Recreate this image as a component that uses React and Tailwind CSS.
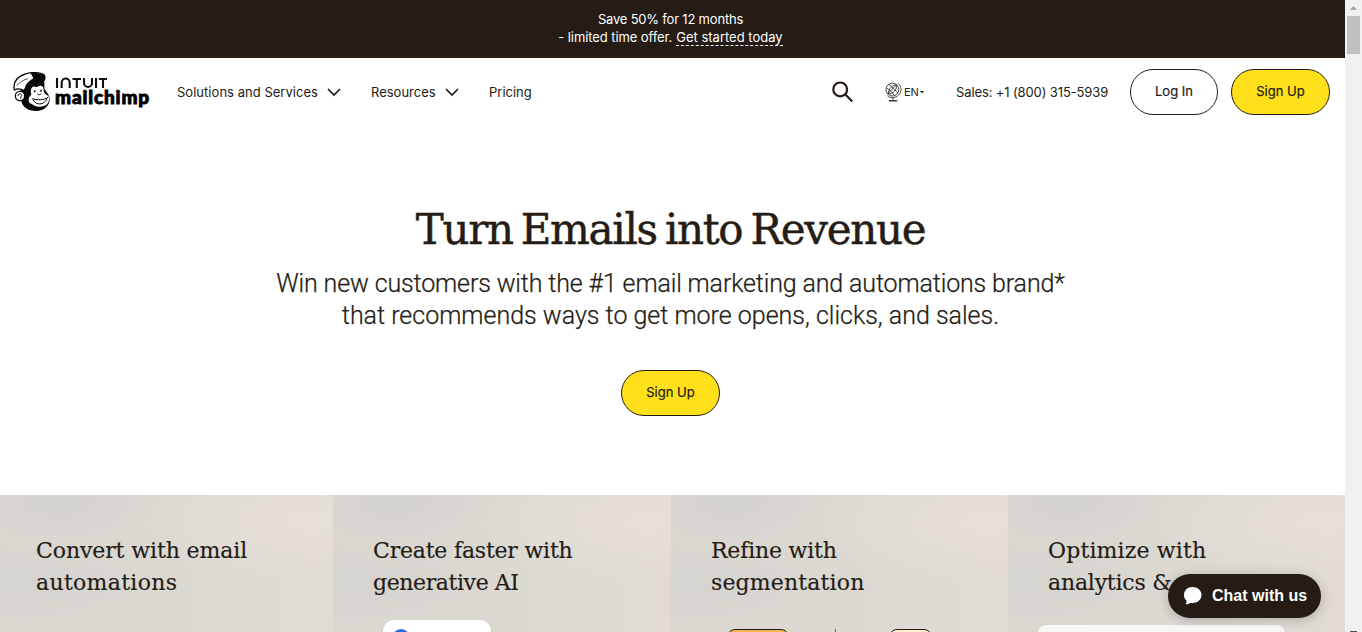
const serif = "font-['DejaVu_Serif',serif]";

function Mascot() {
  return (
    <svg width="38" height="40" viewBox="39 36 114 120" className="block shrink-0">
      <path d="M72 78C82 62 112 56 132 64C134 72 132 80 134 88C140 96 146 104 149 114C152 134 134 153 108 153C84 153 68 142 64 124L60 94Z" fill="#0b0908" />
      <path d="M43 90C38 62 56 48 76 42C92 36 118 36 132 44C137 50 134 60 130 65C110 56 88 64 72 92C62 86 50 86 43 90Z" fill="#fff" stroke="#0b0908" strokeWidth="4" />
      <path d="M92 40C106 38 126 38 134 47C136 56 133 62 130 66C110 54 86 66 74 88C74 76 84 64 100 55C98 50 95 45 92 40Z" fill="#0b0908" />
      <path d="M50 78C58 66 70 60 84 56" fill="none" stroke="#0b0908" strokeWidth="2" />
      <circle cx="60" cy="108" r="14" fill="#fff" stroke="#0b0908" strokeWidth="4" />
      <path d="M54 108C54 100 64 99 65 106C65 110 61 111 62 116" fill="none" stroke="#0b0908" strokeWidth="3" />
      <path d="M94 104C90 92 94 78 104 80C110 82 112 82 116 78C126 74 133 82 131 94C133 100 136 104 142 106C150 112 149 124 141 133C130 143 106 143 96 132C84 130 82 112 94 104Z" fill="#fff" />
      <path d="M104 91V97M123 89V95" fill="none" stroke="#0b0908" strokeWidth="4.5" />
      <path d="M112 102C116 106 122 104 124 101M97 116C112 121 130 121 144 112M99 118C106 137 134 137 141 115" fill="none" stroke="#0b0908" strokeWidth="3" />
    </svg>
  );
}

function Logo() {
  return (
    <div className="flex w-[139px] items-center gap-[4px]">
      <Mascot />
      <div className="w-[97px] text-black">
        <svg width="53" height="12" viewBox="0 0 53 12" className="block" fill="none" stroke="#111" strokeWidth="2.1">
          <path d="M2 1V11M6.7 11V5.5A4 4 0 0 1 14.7 5.5V11M17.5 2H26M21.8 2V11M29 1V6A4 4 0 0 0 37 6V1M41 1V11M43.8 2H52M48 2V11" />
        </svg>
        <div className="whitespace-nowrap pb-[3px] font-['Lato',sans-serif] text-[19px] leading-[16px] font-black tracking-[0.85px] [-webkit-text-stroke:0.9px_#000]">mailchimp</div>
      </div>
    </div>
  );
}

function Chevron() {
  return (
    <svg width="14" height="9" viewBox="0 0 14 9" className="block shrink-0" fill="none" stroke="#241c15" strokeWidth="1.7">
      <path d="M1 1L7 7L13 1" />
    </svg>
  );
}

function Globe() {
  return (
    <svg width="17" height="20" viewBox="0 0 17 20" className="block" fill="none" stroke="#241c15" strokeWidth="0.8">
      <circle cx="7.4" cy="7.6" r="6.4" />
      <path d="M13 1.2C16.8 4.6 17 10.2 13.6 13C10.6 16.2 5.5 16.6 2.4 13.8M8 15.8V18.6" />
      <path d="M3.8 18.8H12.2" strokeWidth="1.3" />
      <path d="M11.5 2.8C7.5 2.6 3.2 7 3.2 12M11.5 2.8C9.2 5.2 5 9 3.2 12M11.5 2.8C12.4 7 8 12 3.2 12M4 2.5C6.4 4.4 11.4 9.4 12.8 11M1.5 6C4.2 7.4 8 11 9.4 13.5" />
    </svg>
  );
}

function Pill({ yellow, w, children }) {
  return (
    <button className={`flex h-[46px] items-center justify-center whitespace-nowrap rounded-full border border-[#241c15] pb-[3px] text-[13px] leading-4 [-webkit-text-stroke:0.2px_#241c15] ${yellow ? "bg-[#ffe01b]" : "bg-white"} ${w}`}>
      {children}
    </button>
  );
}

function Card({ lines, first, tracking, children }) {
  return (
    <section className={`relative h-[137px] overflow-hidden bg-[radial-gradient(ellipse_at_92%_20%,#e7dfd9_0%,transparent_38%),radial-gradient(ellipse_at_18%_4%,#d4d2cd_0%,transparent_24%),radial-gradient(ellipse_at_5%_65%,#d6d4ce_0%,transparent_35%),linear-gradient(90deg,#dad7d1,#dcd9d3_60%,#e2dbd5)] pt-[40px] ${first ? "pl-[36px]" : "pl-[40px]"}`}>
      <h2 className={`${serif} whitespace-nowrap text-[22px] leading-[32px] text-[#241c15] [-webkit-text-stroke:0.15px_#241c15]`}>
        {lines.map((line, i) => <div key={line} className={tracking[i]}>{line}</div>)}
      </h2>
      {children}
    </section>
  );
}

export default function App() {
  return (
    <div className="flex h-[632px] w-[1362px] overflow-hidden bg-white font-['Inter','Liberation_Sans',sans-serif] text-[#241c15]">
      <div className="relative w-[1345px] shrink-0">
        <div className="flex h-[58px] flex-col items-center whitespace-nowrap bg-[#241c15] pr-1 pt-[10px] text-[13px] leading-[18px] text-white">
          <div className="tracking-[-0.2px]">Save 50% for 12 months</div>
          <div className="flex gap-[4px]">
            <div className="tracking-[-0.09px]">- limited time offer.</div>
            <a className="h-[18px] border-b border-dashed border-white">Get started today</a>
          </div>
        </div>
        <header className="flex h-[68px] items-center justify-between whitespace-nowrap pl-[13px] pr-[15px] text-[13px] leading-4">
          <div className="flex items-center">
            <Logo />
            <nav className="ml-[25px] flex items-center">
              <div className="w-[142px] tracking-[0.03px]">Solutions and Services</div>
              <div className="ml-[8px] mr-[30px]"><Chevron /></div>
              <div className="w-[65px]">Resources</div>
              <div className="ml-[9px] mr-[30px]"><Chevron /></div>
              <div>Pricing</div>
            </nav>
          </div>
          <div className="flex items-center">
            <svg width="22" height="22" viewBox="0 0 22 22" fill="none" stroke="#241c15" strokeWidth="2.2"><circle cx="8.2" cy="8.4" r="6.9" /><path d="M13.1 13.3L20.3 20.5" /></svg>
            <div className="ml-[31px] mr-[2px]"><Globe /></div>
            <div className="w-[15px] text-[11px] tracking-[-0.2px]">EN</div>
            <svg width="4" height="3" className="ml-px"><path d="M0 0H4L2 2.5Z" fill="#241c15" /></svg>
            <div className="ml-[32px] mr-[22px] w-[152px] tracking-[-0.12px]">Sales: +1 (800) 315-5939</div>
            <Pill w="w-[88px]">Log In</Pill>
            <div className="ml-[13px]"><Pill yellow w="w-[99px]">Sign Up</Pill></div>
          </div>
        </header>
        <main className="flex h-[369px] flex-col items-center whitespace-nowrap pr-1 pt-[77px]">
          <h1 className={`${serif} text-[42px] leading-[54px] tracking-[-1.3px] [word-spacing:-4px] [-webkit-text-stroke:0.5px_#241c15]`}>Turn Emails into Revenue</h1>
          <div className="mt-[11px] flex flex-col items-center font-['Roboto',sans-serif] text-[25px] font-light leading-[32px] [-webkit-text-stroke:0.25px_#241c15]">
            <div className="tracking-[-0.14px]">Win new customers with the #1 email marketing and automations brand*</div>
            <div>that recommends ways to get more opens, clicks, and sales.</div>
          </div>
          <div className="mt-[38px]"><Pill yellow w="w-[99px]">Sign Up</Pill></div>
        </main>
        <div className="grid grid-cols-[333px_338px_337px_337px]">
          <Card first lines={["Convert with email", "automations"]} tracking={["tracking-[-0.1px]", "tracking-[0.3px]"]} />
          <Card lines={["Create faster with", "generative AI"]} tracking={["tracking-[-0.2px]", "tracking-[-0.4px]"]}>
            <div className="absolute left-[50px] top-[125px] h-[40px] w-[108px] rounded-[11px] bg-white pl-[9px] pt-[9px] shadow-sm"><div className="size-[18px] rounded-full bg-[#286eea]" /></div>
          </Card>
          <Card lines={["Refine with", "segmentation"]} tracking={["tracking-[-0.2px]", "tracking-[0.15px]"]}>
            <div className="absolute left-[56px] top-[134px] h-5 w-[62px] rounded-lg border border-[#241c15] bg-[#f2b64e]" />
            <div className="absolute left-[164px] top-[134px] h-3 w-px bg-[#6d6963]" />
            <div className="absolute left-[218px] top-[134px] h-5 w-[43px] rounded-lg border border-[#241c15] bg-[#fff0cc]" />
          </Card>
          <Card lines={["Optimize with", "analytics & reporting"]} tracking={["tracking-[0.15px]", "tracking-[-0.2px]"]}>
            <div className="absolute left-[30px] top-[130px] h-10 w-[247px] rounded-lg bg-[#f8f7f6]" />
          </Card>
        </div>
        <button className="absolute left-[1168px] top-[574px] flex h-[44px] w-[153px] items-center whitespace-nowrap rounded-full bg-[#241c15] pl-[15px] text-white shadow-[0_2px_12px_rgba(0,0,0,0.22)]">
          <svg width="19" height="19" viewBox="0 0 19 19"><path d="M9.5 0C14.5 0 18.5 3.5 18.5 8C18.5 12.5 14.5 16 9.5 16C8.8 16 8 15.9 7.3 15.7C6 17 4.2 17.5 2.5 17C3.4 16 3.8 14.8 3.5 13.7C1.8 12.3 1 10.2 1 8C1 3.5 4.5 0 9.5 0Z" fill="currentColor" /></svg>
          <div className="ml-[10px] pb-px font-['Liberation_Sans',sans-serif] text-[16px] font-bold leading-5">Chat with us</div>
        </button>
      </div>
      <div className="flex w-[17px] flex-col items-center justify-between bg-[#f1f1f1] pt-[6px]">
        <div className="flex flex-col items-center gap-[6px]">
          <svg width="7" height="4"><path d="M0 4L3.5 0L7 4Z" fill="#a3a3a3" /></svg>
          <div className="h-[38px] w-[13px] bg-[#c1c1c1]" />
        </div>
        <div className="h-px w-[7px] bg-[#505050]" />
      </div>
    </div>
  );
}
